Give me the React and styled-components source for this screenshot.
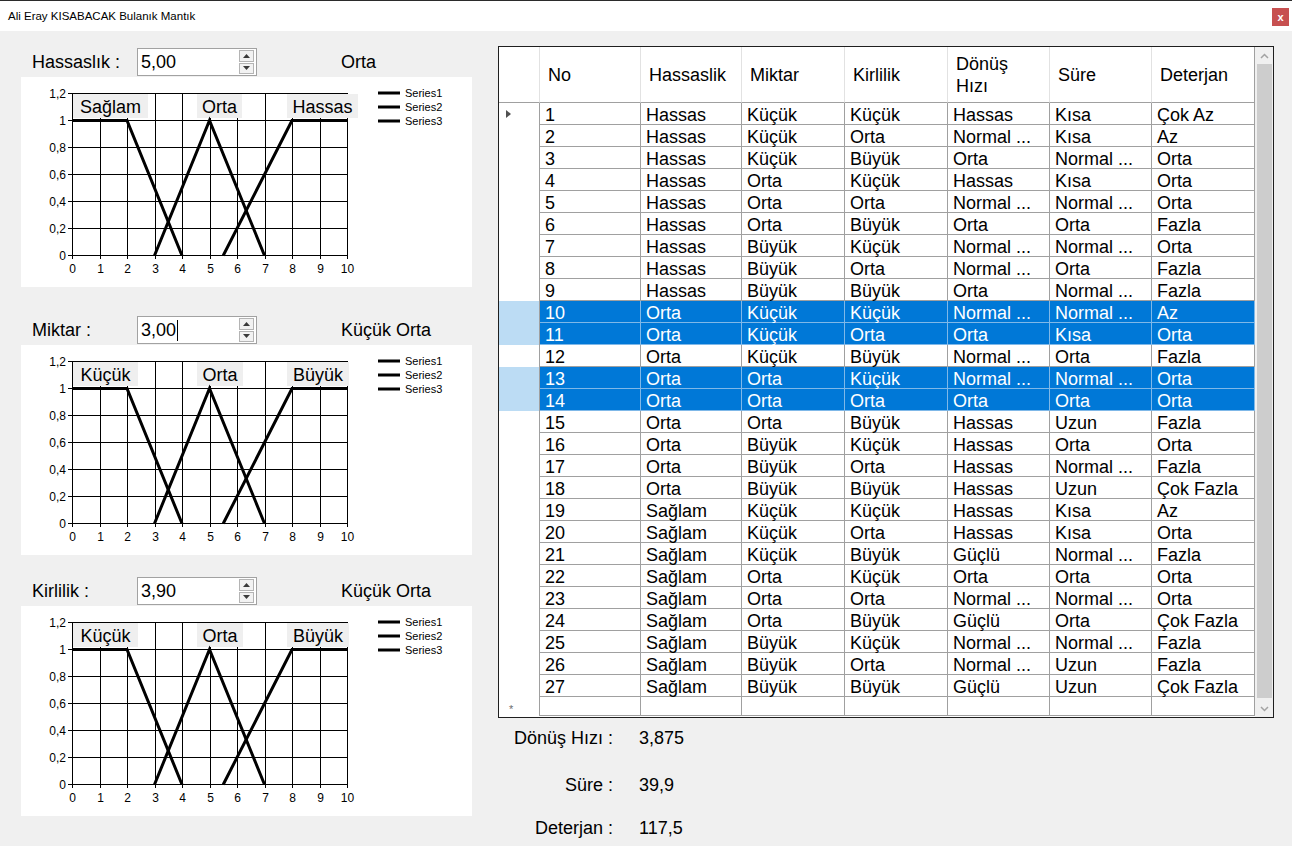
import React from "react";
import styled, { createGlobalStyle } from "styled-components";

const GlobalStyle = createGlobalStyle`
  html, body { margin: 0; padding: 0; }
  body {
    background: #f0f0f0;
    font-family: "Liberation Sans", Arial, sans-serif;
    color: #000;
  }
`;

const rows = [
  ["1", "Hassas", "Küçük", "Küçük", "Hassas", "Kısa", "Çok Az"],
  ["2", "Hassas", "Küçük", "Orta", "Normal ...", "Kısa", "Az"],
  ["3", "Hassas", "Küçük", "Büyük", "Orta", "Normal ...", "Orta"],
  ["4", "Hassas", "Orta", "Küçük", "Hassas", "Kısa", "Orta"],
  ["5", "Hassas", "Orta", "Orta", "Normal ...", "Normal ...", "Orta"],
  ["6", "Hassas", "Orta", "Büyük", "Orta", "Orta", "Fazla"],
  ["7", "Hassas", "Büyük", "Küçük", "Normal ...", "Normal ...", "Orta"],
  ["8", "Hassas", "Büyük", "Orta", "Normal ...", "Orta", "Fazla"],
  ["9", "Hassas", "Büyük", "Büyük", "Orta", "Normal ...", "Fazla"],
  ["10", "Orta", "Küçük", "Küçük", "Normal ...", "Normal ...", "Az"],
  ["11", "Orta", "Küçük", "Orta", "Orta", "Kısa", "Orta"],
  ["12", "Orta", "Küçük", "Büyük", "Normal ...", "Orta", "Fazla"],
  ["13", "Orta", "Orta", "Küçük", "Normal ...", "Normal ...", "Orta"],
  ["14", "Orta", "Orta", "Orta", "Orta", "Orta", "Orta"],
  ["15", "Orta", "Orta", "Büyük", "Hassas", "Uzun", "Fazla"],
  ["16", "Orta", "Büyük", "Küçük", "Hassas", "Orta", "Orta"],
  ["17", "Orta", "Büyük", "Orta", "Hassas", "Normal ...", "Fazla"],
  ["18", "Orta", "Büyük", "Büyük", "Hassas", "Uzun", "Çok Fazla"],
  ["19", "Sağlam", "Küçük", "Küçük", "Hassas", "Kısa", "Az"],
  ["20", "Sağlam", "Küçük", "Orta", "Hassas", "Kısa", "Orta"],
  ["21", "Sağlam", "Küçük", "Büyük", "Güçlü", "Normal ...", "Fazla"],
  ["22", "Sağlam", "Orta", "Küçük", "Orta", "Orta", "Orta"],
  ["23", "Sağlam", "Orta", "Orta", "Normal ...", "Normal ...", "Orta"],
  ["24", "Sağlam", "Orta", "Büyük", "Güçlü", "Orta", "Çok Fazla"],
  ["25", "Sağlam", "Büyük", "Küçük", "Normal ...", "Normal ...", "Fazla"],
  ["26", "Sağlam", "Büyük", "Orta", "Normal ...", "Uzun", "Fazla"],
  ["27", "Sağlam", "Büyük", "Büyük", "Güçlü", "Uzun", "Çok Fazla"],
];

const selected = ["10", "11", "13", "14"];
const headers = ["No", "Hassaslik", "Miktar", "Kirlilik", "Dönüş Hızı", "Süre", "Deterjan"];

const groups = [
  {
    label: "Hassaslık :",
    value: "5,00",
    caption: "Orta",
    top: 17,
    tags: [
      { text: "Sağlam", x: 52, w: 75 },
      { text: "Orta", x: 176, w: 45 },
      { text: "Hassas", x: 266, w: 71 },
    ],
  },
  {
    label: "Miktar :",
    value: "3,00",
    caption: "Küçük Orta",
    top: 29,
    caret: true,
    tags: [
      { text: "Küçük", x: 52, w: 65 },
      { text: "Orta", x: 176, w: 46 },
      { text: "Büyük", x: 266, w: 62 },
    ],
  },
  {
    label: "Kirlilik :",
    value: "3,90",
    caption: "Küçük Orta",
    top: 22,
    tags: [
      { text: "Küçük", x: 52, w: 65 },
      { text: "Orta", x: 176, w: 46 },
      { text: "Büyük", x: 266, w: 62 },
    ],
  },
];

const results = [
  { label: "Dönüş Hızı :", value: "3,875", top: 9 },
  { label: "Süre :", value: "39,9", top: 25 },
  { label: "Deterjan :", value: "117,5", top: 21 },
];

const Window = styled.div`
  width: 1292px;
  height: 846px;
  overflow: hidden;
  background: #f0f0f0;
`;

const TitleBar = styled.div`
  height: 31px;
  box-sizing: border-box;
  border-top: 1px solid #2b2b2b;
  background: #fff;
  display: flex;
  align-items: center;
  justify-content: space-between;
  padding: 0 3px 0 8px;
`;

const Title = styled.span`
  font-size: 11.5px;
  color: #000;
`;

const CloseBtn = styled.div`
  width: 17px;
  height: 18px;
  background: #c75050;
  color: #fff;
  font-size: 11px;
  font-weight: bold;
  display: flex;
  align-items: center;
  justify-content: center;
  margin-top: 2px;
`;

const Body = styled.div`
  display: flex;
  align-items: flex-start;
`;

const LeftCol = styled.div`
  width: 451px;
  margin-left: 21px;
  display: flex;
  flex-direction: column;
`;

const Group = styled.div`
  margin-top: ${(p) => p.$top}px;
  display: flex;
  flex-direction: column;
`;

const GroupHead = styled.div`
  height: 28px;
  display: flex;
  align-items: center;
  padding-left: 11px;
  font-size: 18px;
`;

const Label = styled.span`
  width: 105px;
`;

const Caption = styled.span`
  margin-left: 84px;
`;

const Spin = styled.div`
  width: 120px;
  height: 28px;
  box-sizing: border-box;
  border: 1px solid #a2a2a2;
  background: #fff;
  display: flex;
  align-items: center;
  padding-left: 3px;
`;

const SpinText = styled.span`
  flex: 1;
  font-size: 18px;
  display: flex;
  align-items: center;
`;

const Caret = styled.span`
  width: 1px;
  height: 21px;
  background: #000;
  margin-left: 1px;
`;

const SpinButtons = styled.div`
  width: 15px;
  height: 24px;
  margin-right: 2px;
  display: flex;
  flex-direction: column;
  gap: 1px;
`;

const SpinButton = styled.div`
  flex: 1;
  box-sizing: border-box;
  border: 1px solid #b4b4b4;
  background: #f2f2f2;
  display: flex;
  align-items: center;
  justify-content: center;
`;

const ChartPanel = styled.div`
  width: 451px;
  height: 210px;
  margin-top: 1px;
  background: #fff;
`;

const RightCol = styled.div`
  margin-left: 26px;
  margin-top: 15px;
  display: flex;
  flex-direction: column;
`;

const Grid = styled.div`
  width: 776px;
  height: 672px;
  box-sizing: border-box;
  border: 1px solid #1f1f1f;
  background: #fff;
  display: flex;
`;

const GridBody = styled.div`
  width: 756px;
  display: flex;
  flex-direction: column;
`;

const cols = "41px 101px 101px 103px 103px 102px 102px 103px";

const HeadRow = styled.div`
  display: grid;
  grid-template-columns: ${cols};
  height: 56px;
`;

const HeadCell = styled.div`
  box-sizing: border-box;
  border-right: 1px solid #e2e2e2;
  border-bottom: 1px solid #a0a0a0;
  display: flex;
  align-items: center;
  padding: 1px 30px 0 8px;
  font-size: 18px;
  line-height: 22px;
  &:last-child {
    border-right: 1px solid #a0a0a0;
  }
`;

const Row = styled.div`
  display: grid;
  grid-template-columns: ${cols};
  height: ${(p) => (p.$new ? 19 : 22)}px;
  background: ${(p) => (p.$sel ? "#0078d7" : "#fff")};
  color: ${(p) => (p.$sel ? "#fff" : "#000")};
`;

const RowHead = styled.div`
  box-sizing: border-box;
  border-right: 1px solid #a0a0a0;
  background: ${(p) => (p.$sel ? "#bcdcf4" : "#fff")};
  display: flex;
  align-items: center;
  padding-left: 7px;
`;

const Cell = styled.div`
  box-sizing: border-box;
  border-right: 1px solid ${(p) => (p.$sel ? "#7fb8e8" : "#a0a0a0")};
  border-bottom: 1px solid ${(p) => (p.$sel ? "#7fb8e8" : "#a0a0a0")};
  padding: 3px 0 0 5px;
  font-size: 18px;
  line-height: 18px;
  white-space: nowrap;
`;

const NewMark = styled.span`
  font-size: 11px;
  color: #6d6d6d;
  margin-left: 3px;
  margin-top: 4px;
`;

const ScrollBar = styled.div`
  width: 18px;
  background: #f0f0f0;
  display: flex;
  flex-direction: column;
`;

const ScrollArrow = styled.div`
  height: 17px;
  display: flex;
  align-items: center;
  justify-content: center;
`;

const Thumb = styled.div`
  flex: 1;
  margin: 0 1px 2px 2px;
  background: #cdcdcd;
`;

const Results = styled.div`
  display: flex;
  flex-direction: column;
`;

const ResultRow = styled.div`
  margin-top: ${(p) => p.$top}px;
  display: flex;
  font-size: 18px;
  line-height: 22px;
`;

const ResultLabel = styled.span`
  width: 115px;
  text-align: right;
`;

const ResultValue = styled.span`
  margin-left: 26px;
`;

const X0 = 51;
const Y0 = 178;
const UX = 27.5;
const UY = 135;
const px = (x) => X0 + x * UX;
const py = (y) => Y0 - y * UY;
const series = [
  [[0, 1], [2, 1], [4, 0]],
  [[3, 0], [5, 1], [7, 0]],
  [[5.5, 0], [8, 1], [10, 1]],
];
const yTicks = [0, 0.2, 0.4, 0.6, 0.8, 1, 1.2];

const Chart = ({ tags }) => (
  <svg width="451" height="210" style={{ display: "block" }} fontFamily="Liberation Sans, Arial, sans-serif">
    {yTicks.map((t) => {
      const y = Math.round(py(t)) + 0.5;
      return (
        <g key={t}>
          <line x1={X0 - 4} x2={px(10) + 0.5} y1={y} y2={y} stroke="#000" strokeWidth="1" />
          <text x={X0 - 6} y={y + 4} fontSize="12" textAnchor="end">
            {String(t).replace(".", ",")}
          </text>
        </g>
      );
    })}
    {Array.from({ length: 11 }, (_, i) => {
      const x = Math.round(px(i)) + 0.5;
      return (
        <g key={i}>
          <line x1={x} x2={x} y1={py(1.2)} y2={Y0 + 4} stroke="#000" strokeWidth="1" />
          <text x={x} y={Y0 + 18} fontSize="12" textAnchor="middle">
            {i}
          </text>
        </g>
      );
    })}
    {tags.map((t) => (
      <g key={t.text}>
        <rect x={t.x} y={17} width={t.w} height={24} fill="#efefef" />
        <text x={t.x + t.w / 2} y={36} fontSize="18" textAnchor="middle">
          {t.text}
        </text>
      </g>
    ))}
    {series.map((s, i) => (
      <polyline
        key={i}
        points={s.map(([x, y]) => `${px(x)},${py(y) + 0.5}`).join(" ")}
        fill="none"
        stroke="#000"
        strokeWidth="3"
      />
    ))}
    {[1, 2, 3].map((n, i) => (
      <g key={n}>
        <line x1={357} x2={379} y1={16 + i * 14} y2={16 + i * 14} stroke="#000" strokeWidth="3" />
        <text x={384} y={20 + i * 14} fontSize="11">
          Series{n}
        </text>
      </g>
    ))}
  </svg>
);

const Tri = ({ up }) => (
  <svg width="7" height="4" viewBox="0 0 7 4">
    <polygon points={up ? "0,4 7,4 3.5,0" : "0,0 7,0 3.5,4"} fill="#3a3a3a" />
  </svg>
);

const Chevron = ({ up }) => (
  <svg width="9" height="6" viewBox="0 0 9 6">
    <polyline points={up ? "1,5 4.5,1.5 8,5" : "1,1 4.5,4.5 8,1"} fill="none" stroke="#a3a3a3" strokeWidth="1.5" />
  </svg>
);

const App = () => (
  <Window>
    <GlobalStyle />
    <TitleBar>
      <Title>Ali Eray KISABACAK Bulanık Mantık</Title>
      <CloseBtn>x</CloseBtn>
    </TitleBar>
    <Body>
      <LeftCol>
        {groups.map((g) => (
          <Group key={g.label} $top={g.top}>
            <GroupHead>
              <Label>{g.label}</Label>
              <Spin>
                <SpinText>
                  {g.value}
                  {g.caret && <Caret />}
                </SpinText>
                <SpinButtons>
                  <SpinButton>
                    <Tri up />
                  </SpinButton>
                  <SpinButton>
                    <Tri />
                  </SpinButton>
                </SpinButtons>
              </Spin>
              <Caption>{g.caption}</Caption>
            </GroupHead>
            <ChartPanel>
              <Chart tags={g.tags} />
            </ChartPanel>
          </Group>
        ))}
      </LeftCol>
      <RightCol>
        <Grid>
          <GridBody>
            <HeadRow>
              <HeadCell />
              {headers.map((h) => (
                <HeadCell key={h}>{h}</HeadCell>
              ))}
            </HeadRow>
            {rows.map((r, i) => {
              const sel = selected.includes(r[0]);
              return (
                <Row key={r[0]} $sel={sel}>
                  <RowHead $sel={sel}>
                    {i === 0 && (
                      <svg width="5" height="8" viewBox="0 0 5 8">
                        <polygon points="0,0 5,4 0,8" fill="#505050" />
                      </svg>
                    )}
                  </RowHead>
                  {r.map((c, j) => (
                    <Cell key={j} $sel={sel}>
                      {c}
                    </Cell>
                  ))}
                </Row>
              );
            })}
            <Row $new>
              <RowHead>
                <NewMark>*</NewMark>
              </RowHead>
              {headers.map((h) => (
                <Cell key={h} />
              ))}
            </Row>
          </GridBody>
          <ScrollBar>
            <ScrollArrow>
              <Chevron up />
            </ScrollArrow>
            <Thumb />
            <ScrollArrow>
              <Chevron />
            </ScrollArrow>
          </ScrollBar>
        </Grid>
        <Results>
          {results.map((r) => (
            <ResultRow key={r.label} $top={r.top}>
              <ResultLabel>{r.label}</ResultLabel>
              <ResultValue>{r.value}</ResultValue>
            </ResultRow>
          ))}
        </Results>
      </RightCol>
    </Body>
  </Window>
);

export default App;
